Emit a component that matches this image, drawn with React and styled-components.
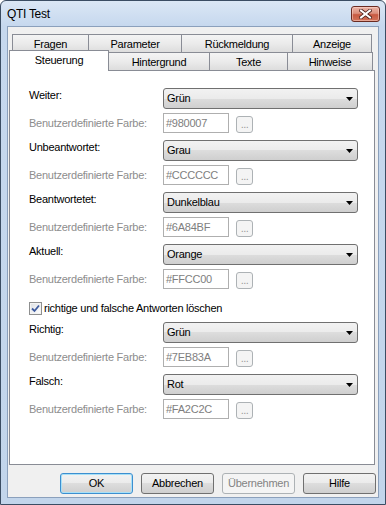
import React from "react";
import styled, { createGlobalStyle, css } from "styled-components";

const GlobalStyle = createGlobalStyle`
  html, body { margin: 0; padding: 0; background: #ffffff; }
  body { font-family: "Liberation Sans", Arial, sans-serif; }
  * { box-sizing: border-box; }
`;

const Window = styled.div`
  width: 386px;
  height: 505px;
  border: 1px solid #3b4d63;
  border-radius: 6px 6px 0 0;
  background: linear-gradient(#dbe7f5 0px, #c6d8ee 25px, #c2d5eb 100%);
  display: flex;
  flex-direction: column;
  overflow: hidden;
`;

const TitleBar = styled.div`
  height: 25px;
  flex: none;
  display: flex;
  align-items: center;
  justify-content: space-between;
  padding: 0 5px 0 6px;
`;

const Title = styled.span`
  font-size: 12px;
  letter-spacing: -0.3px;
  color: #000;
`;

const CloseButton = styled.div`
  width: 29px;
  height: 16px;
  border: 1px solid #6a2b22;
  border-radius: 3px;
  background: linear-gradient(#eab3a6 0%, #dc907d 45%, #c75a42 55%, #d2735a 100%);
  box-shadow: inset 0 0 0 1px rgba(255, 220, 210, 0.5);
  display: flex;
  align-items: center;
  justify-content: center;
`;

const Client = styled.div`
  flex: 1;
  margin: 0 6px 6px 6px;
  border: 1px solid #8ba0bc;
  background: #f0f0f0;
  display: flex;
  flex-direction: column;
  padding: 7px 2px 0 1px;
`;

const TabControl = styled.div`
  width: 366px;
  display: flex;
  flex-direction: column;
`;

const TabRow = styled.div`
  display: flex;
  align-items: flex-end;
  height: 18px;
  padding-left: ${(p) => p.$indent}px;
`;

const Tab = styled.div`
  width: ${(p) => p.$w}px;
  height: 18px;
  flex: none;
  border: 1px solid #898c95;
  border-bottom: none;
  margin-left: -1px;
  &:first-child { margin-left: 0; }
  background: linear-gradient(#f4f4f4 0%, #ebebeb 50%, #dddddd 100%);
  font-size: 11px;
  letter-spacing: -0.25px;
  line-height: 13px;
  padding-top: 3px;
  text-align: center;
  color: #000;
  ${(p) =>
    p.$active &&
    css`
      position: relative;
      z-index: 2;
      height: 21px;
      margin-top: -2px;
      margin-bottom: -1px;
      background: #ffffff;
    `}
`;

const Panel = styled.div`
  height: 395px;
  border: 1px solid #898c95;
  background: #ffffff;
  padding: 17px 0 0 19px;
  display: flex;
  flex-direction: column;
`;

const SelectRow = styled.div`
  display: grid;
  grid-template-columns: 134px 195px;
  align-items: start;
  margin-top: ${(p) => p.$top || 0}px;
`;

const ColorRow = styled.div`
  display: grid;
  grid-template-columns: 134px 66px 24px;
  align-items: center;
  height: 20px;
  margin-top: 4px;
`;

const Label = styled.div`
  font-size: 11px;
  letter-spacing: -0.25px;
  line-height: 13px;
  white-space: nowrap;
  color: ${(p) => (p.$disabled ? "#8d8d8d" : "#000")};
  padding-top: ${(p) => (p.$disabled ? 0 : 1)}px;
`;

const Select = styled.div`
  height: 21px;
  border: 1px solid #707070;
  border-radius: 3px;
  background: linear-gradient(#f2f2f2 0%, #ebebeb 50%, #dddddd 50%, #cfcfcf 100%);
  display: flex;
  align-items: center;
  justify-content: space-between;
  padding: 0 4px 0 3px;
  font-size: 11px;
  letter-spacing: -0.25px;
  line-height: 13px;
  color: #000;
`;

const TextBox = styled.div`
  height: 20px;
  border: 1px solid #afafaf;
  background: #ffffff;
  font-size: 11px;
  letter-spacing: -0.25px;
  line-height: 13px;
  color: #7e7e7e;
  padding: 0 2px;
  display: flex;
  align-items: center;
`;

const SmallButton = styled.div`
  width: 17px;
  height: 17px;
  margin-left: 7px;
  align-self: end;
  border: 1px solid #adb2b5;
  border-radius: 3px;
  background: #f4f4f4;
  font-size: 11px;
  line-height: 13px;
  padding-top: 1px;
  text-align: center;
  color: #9a9a9a;
  letter-spacing: -0.5px;
`;

const CheckRow = styled.div`
  display: flex;
  align-items: center;
  gap: 2px;
  height: 13px;
  margin-top: 13px;
`;

const CheckBox = styled.div`
  width: 13px;
  height: 13px;
  flex: none;
  border: 1px solid #8e8f8f;
  background: linear-gradient(135deg, #dcdfe3 0%, #ffffff 100%);
  box-shadow: inset 0 0 0 1px #f3f3f3;
  display: flex;
  align-items: center;
  justify-content: center;
`;

const CheckLabel = styled.span`
  font-size: 11px;
  letter-spacing: -0.25px;
  line-height: 13px;
  color: #000;
`;

const ButtonRow = styled.div`
  display: flex;
  justify-content: flex-end;
  gap: 8px;
  margin-top: 8px;
`;

const Button = styled.div`
  width: 73px;
  height: 21px;
  border: 1px solid #707070;
  border-radius: 3px;
  background: linear-gradient(#f2f2f2 0%, #ebebeb 50%, #dddddd 50%, #cfcfcf 100%);
  font-size: 11px;
  letter-spacing: -0.25px;
  line-height: 13px;
  color: #000;
  display: flex;
  align-items: center;
  justify-content: center;
  ${(p) =>
    p.$default &&
    css`
      border-color: #3c8fd0;
      box-shadow: inset 0 0 0 1px #a8e0f7;
    `}
  ${(p) =>
    p.$disabled &&
    css`
      border-color: #adb2b5;
      background: #f4f4f4;
      color: #838383;
    `}
`;

const Arrow = () => (
  <svg width="7" height="4" viewBox="0 0 7 4">
    <path d="M0 0 H7 L3.5 4 Z" fill="#000" />
  </svg>
);

const CloseX = () => (
  <svg width="13" height="10" viewBox="0 0 13 10">
    <path d="M2 1.5 L11 8.5 M11 1.5 L2 8.5" stroke="#4a2019" strokeWidth="3.6" strokeLinecap="square" />
    <path d="M2 1.5 L11 8.5 M11 1.5 L2 8.5" stroke="#ffffff" strokeWidth="2" strokeLinecap="square" />
  </svg>
);

const Check = () => (
  <svg width="9" height="9" viewBox="0 0 9 9">
    <path d="M1 4.5 L3.5 7 L8 1.5" stroke="#3d5a9e" strokeWidth="1.8" fill="none" />
  </svg>
);

const groups1 = [
  { label: "Weiter:", value: "Grün", color: "#980007" },
  { label: "Unbeantwortet:", value: "Grau", color: "#CCCCCC" },
  { label: "Beantwortetet:", value: "Dunkelblau", color: "#6A84BF" },
  { label: "Aktuell:", value: "Orange", color: "#FFCC00" },
];

const groups2 = [
  { label: "Richtig:", value: "Grün", color: "#7EB83A" },
  { label: "Falsch:", value: "Rot", color: "#FA2C2C" },
];

const Group = ({ g, first }) => (
  <>
    <SelectRow $top={first ? 0 : 7}>
      <Label>{g.label}</Label>
      <Select>
        <span>{g.value}</span>
        <Arrow />
      </Select>
    </SelectRow>
    <ColorRow>
      <Label $disabled>Benutzerdefinierte Farbe:</Label>
      <TextBox>{g.color}</TextBox>
      <SmallButton>...</SmallButton>
    </ColorRow>
  </>
);

export default function App() {
  return (
    <>
      <GlobalStyle />
      <Window>
        <TitleBar>
          <Title>QTI Test</Title>
          <CloseButton>
            <CloseX />
          </CloseButton>
        </TitleBar>
        <Client>
          <TabControl>
            <TabRow $indent={3}>
              <Tab $w={77}>Fragen</Tab>
              <Tab $w={94}>Parameter</Tab>
              <Tab $w={112}>Rückmeldung</Tab>
              <Tab $w={80}>Anzeige</Tab>
            </TabRow>
            <TabRow $indent={0}>
              <Tab $w={100} $active>Steuerung</Tab>
              <Tab $w={102}>Hintergrund</Tab>
              <Tab $w={79}>Texte</Tab>
              <Tab $w={86}>Hinweise</Tab>
            </TabRow>
            <Panel>
              {groups1.map((g, i) => (
                <Group key={g.label} g={g} first={i === 0} />
              ))}
              <CheckRow>
                <CheckBox>
                  <Check />
                </CheckBox>
                <CheckLabel>richtige und falsche Antworten löschen</CheckLabel>
              </CheckRow>
              {groups2.map((g) => (
                <Group key={g.label} g={g} />
              ))}
            </Panel>
          </TabControl>
          <ButtonRow>
            <Button $default>OK</Button>
            <Button>Abbrechen</Button>
            <Button $disabled>Übernehmen</Button>
            <Button>Hilfe</Button>
          </ButtonRow>
        </Client>
      </Window>
    </>
  );
}
